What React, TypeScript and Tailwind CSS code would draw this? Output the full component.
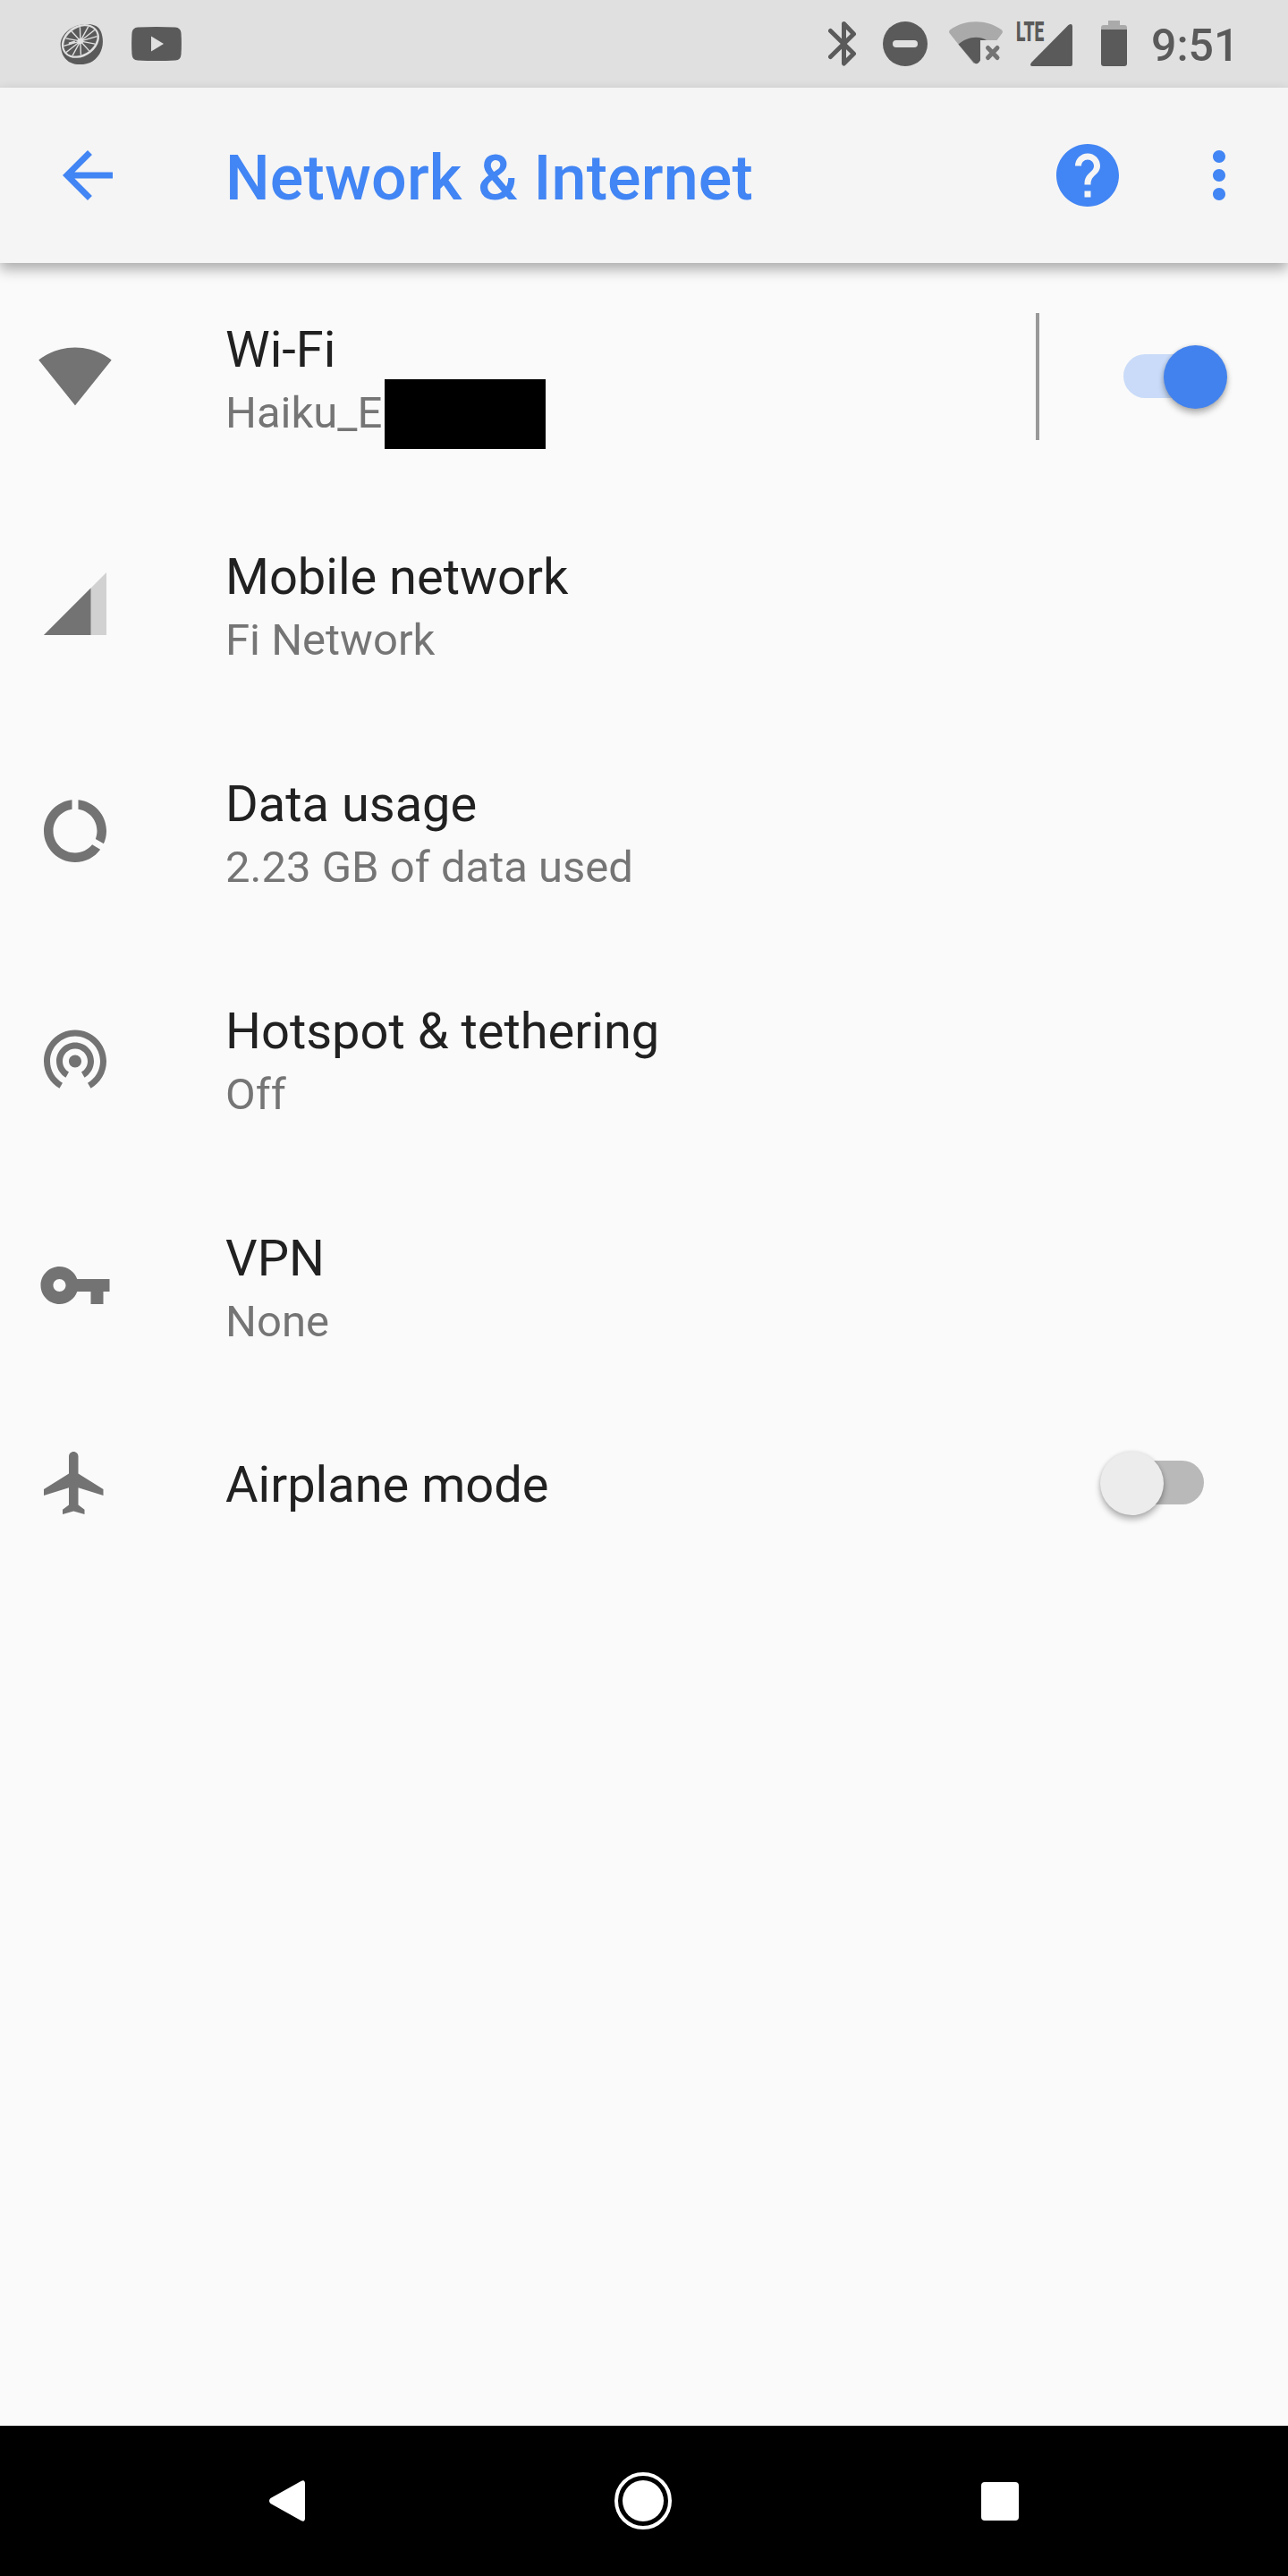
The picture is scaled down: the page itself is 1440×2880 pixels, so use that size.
import React from 'react'
import clsx from 'clsx'

interface IconProps {
  className?: string
}

interface SettingItem {
  id: string
  title: string
  summary?: string
  icon: React.ReactNode
  redacted?: boolean
  divider?: boolean
  checked?: boolean
}

// 24dp icon box at 3.5x density
const Icon = ({ className, children }: IconProps & { children: React.ReactNode }) => (
  <svg viewBox="0 0 24 24" fill="currentColor" className={clsx('h-[84px] w-[84px] shrink-0', className)}>
    {children}
  </svg>
)

const settings: SettingItem[] = [
  {
    id: 'wifi',
    title: 'Wi-Fi',
    summary: 'Haiku_E',
    redacted: true,
    divider: true,
    checked: true,
    icon: <path d="M12.01 21.2L23.64 6.71c-.45-.34-4.93-4-11.64-4C5.28 2.71.81 6.37.36 6.71l11.63 14.49.01.01.01-.01z" />
  },
  {
    id: 'mobile',
    title: 'Mobile network',
    summary: 'Fi Network',
    icon: (
      <>
        <path fillOpacity=".3" d="M2 22h20V2z" />
        <path d="M17 7L2 22h15z" />
      </>
    )
  },
  {
    id: 'data',
    title: 'Data usage',
    summary: '2.23 GB of data used',
    icon: (
      <path d="M13 2.05v3.03c3.39.49 6 3.39 6 6.92 0 .9-.18 1.75-.48 2.54l2.6 1.53c.56-1.24.88-2.62.88-4.07 0-5.18-3.95-9.45-9-9.95zM12 19c-3.87 0-7-3.13-7-7 0-3.53 2.61-6.43 6-6.92V2.05c-5.06.5-9 4.76-9 9.95 0 5.52 4.47 10 9.99 10 3.31 0 6.24-1.61 8.06-4.09l-2.6-1.53C16.17 17.98 14.21 19 12 19z" />
    )
  },
  {
    id: 'hotspot',
    title: 'Hotspot & tethering',
    summary: 'Off',
    icon: (
      <path d="M12 11c-1.1 0-2 .9-2 2s.9 2 2 2 2-.9 2-2-.9-2-2-2zm6 2c0-3.31-2.69-6-6-6s-6 2.69-6 6c0 2.22 1.21 4.15 3 5.19l1-1.74c-1.19-.7-2-1.97-2-3.45 0-2.21 1.79-4 4-4s4 1.79 4 4c0 1.48-.81 2.75-2 3.45l1 1.74c1.79-1.04 3-2.97 3-5.19zM12 3C6.48 3 2 7.48 2 13c0 3.7 2.01 6.92 4.99 8.65l1-1.73C5.61 18.53 4 15.96 4 13c0-4.42 3.58-8 8-8s8 3.58 8 8c0 2.96-1.61 5.53-4 6.92l1 1.73c2.99-1.73 5-4.95 5-8.65 0-5.52-4.48-10-10-10z" />
    )
  },
  {
    id: 'vpn',
    title: 'VPN',
    summary: 'None',
    icon: (
      <path d="M12.65 10C11.83 7.67 9.61 6 7 6c-3.31 0-6 2.69-6 6s2.69 6 6 6c2.61 0 4.83-1.67 5.65-4H17v4h4v-4h2v-4H12.65zM7 14c-1.1 0-2-.9-2-2s.9-2 2-2 2 .9 2 2-.9 2-2 2z" />
    )
  },
  {
    id: 'airplane',
    title: 'Airplane mode',
    checked: false,
    icon: (
      <path d="M21 16v-2l-8-5V3.5c0-.83-.67-1.5-1.5-1.5S10 2.67 10 3.5V9l-8 5v2l8-2.5V19l-2 1.5V22l3.5-1 3.5 1v-1.5L13 19v-5.5l8 2.5z" />
    )
  }
]

const CitrusIcon = () => (
  <svg viewBox="3 1 44 45" preserveAspectRatio="none" className="h-[46px] w-12 shrink-0">
    <path
      d="M4 28C1 14 16 1 32 2c7 .5 11 3 13 8 5 14 0 28-11 34-8 3.500-16 2.500-22-1C7 39 5 35 4 28z"
      fill="#5a5a5a"
    />
    <g transform="translate(24 20.500) rotate(-40)">
      <ellipse rx="21" ry="16.500" fill="#e0e0e0" />
      <ellipse rx="19" ry="14" fill="#5a5a5a" />
      <g stroke="#e0e0e0" strokeWidth="1.300">
        <path d="M-19 0H19M-16.500 7L16.500-7M-9.500 12L9.500-12M0 14V-14M9.500 12L-9.500-12M16.500 7L-16.500-7" />
      </g>
      <circle r="3" fill="#e0e0e0" />
    </g>
    <path d="M12 22l6-2 1 2-7 3z" fill="#e0e0e0" />
  </svg>
)

const StatusBar = () => (
  <header className="flex h-[98px] items-center bg-[#e0e0e0] pl-[67px] text-[#5a5a5a]">
    <CitrusIcon />
    <svg viewBox="0 0 56 38" className="ml-8 h-[38px] w-14 shrink-0">
      <path
        d="M7 .5Q28-.5 49 .5 55 1 55.500 7q.8 12 0 24-.5 6-6.500 6.500-21 1-42 0Q1 37 .5 31-.3 19 .5 7 1 1 7 .5z"
        fill="#5a5a5a"
      />
      <path d="M22 10.500v17L36 19z" fill="#e0e0e0" />
    </svg>

    <svg viewBox="0 0 32 50" fill="none" stroke="currentColor" strokeWidth="5" strokeLinecap="round" strokeLinejoin="round" className="ml-[723px] h-[50px] w-8 shrink-0">
      <path d="M2.500 10.500L28.500 36 17.500 47V2.500L28.500 14 2.500 39.500" />
    </svg>
    <svg viewBox="0 0 50 50" className="ml-[29px] h-[50px] w-[50px] shrink-0">
      <circle cx="25" cy="25" r="25" fill="currentColor" />
      <rect x="11" y="21" width="28" height="8" rx="4" fill="#e0e0e0" />
    </svg>
    <svg viewBox="0 0 60 50" className="ml-6 h-[50px] w-[60px] shrink-0">
      <path
        d="M1 9.500C18-2.700 42-2.700 59 9.500q1.500 1.500.5 3.500l-6 8H35v22L27.500 47 .5 13q-1-2 .5-3.500z"
        fill="#aaaaaa"
      />
      <path d="M10.500 25.500C18 18.500 32 14.500 42 21h-7v22.500c-2 4-5 5-7.500 2z" fill="#5a5a5a" />
      <path d="M43.500 29.500l10.500 11M54 29.500l-10.500 11" stroke="#737373" strokeWidth="5" strokeLinecap="round" />
    </svg>
    <div className="relative ml-4 h-[50px] w-[62px] shrink-0">
      <span className="absolute -top-[5px] -left-px origin-left scale-x-[0.62] font-black text-[31px] leading-[34px]">LTE</span>
      <svg viewBox="0 0 47 47" fill="currentColor" className="absolute right-0 bottom-0 h-[47px] w-[47px]">
        <path d="M42.500 1Q47-1.500 47 3v42q0 2-2 2H2.500Q-1.500 47 1 43z" />
      </svg>
    </div>
    <svg viewBox="0 0 29 51" className="ml-8 h-[51px] w-[29px] shrink-0 -translate-y-px">
      <path d="M8 0h13v5h5q3 0 3 3v3H0V8q0-3 3-3h5z" fill="#aaaaaa" />
      <path d="M0 10h29v38q0 3-3 3H3q-3 0-3-3z" fill="#5a5a5a" />
    </svg>
    <span className="ml-[27px] pt-[3px] text-[50px] leading-none font-medium">9:51</span>
  </header>
)

const AppBar = () => (
  <div className="relative z-10 flex h-[196px] items-center bg-[#f5f5f5] pl-14 text-[#4285f4] shadow-[0_7px_14px_rgba(0,0,0,0.32)]">
    <Icon>
      <path d="M20 11H7.830l5.590-5.590L12 4l-8 8 8 8 1.410-1.410L7.830 13H20v-2z" />
    </Icon>
    <h1 className="ml-28 w-[922px] pt-[6px] text-[70px] leading-[82px] font-medium tracking-[0.15px]">Network &amp; Internet</h1>
    <Icon>
      <path d="M12 2C6.480 2 2 6.480 2 12s4.480 10 10 10 10-4.480 10-10S17.520 2 12 2zm1 17h-2v-2h2v2zm2.070-7.750l-.9.920C13.450 12.900 13 13.500 13 15h-2v-.5c0-1.100.45-2.100 1.170-2.830l1.240-1.260c.37-.36.59-.86.59-1.410 0-1.100-.9-2-2-2s-2 .9-2 2H8c0-2.210 1.790-4 4-4s4 1.790 4 4c0 .88-.36 1.680-.93 2.250z" />
    </Icon>
    <Icon className="ml-[63px]">
      <path d="M12 8c1.100 0 2-.9 2-2s-.9-2-2-2-2 .9-2 2 .9 2 2 2zm0 2c-1.100 0-2 .9-2 2s.9 2 2 2 2-.9 2-2-.9-2-2-2zm0 6c-1.100 0-2 .9-2 2s.9 2 2 2 2-.9 2-2-.9-2-2-2z" />
    </Icon>
  </div>
)

const Toggle = ({ checked }: { checked: boolean }) => (
  <div
    role="switch"
    aria-checked={checked}
    className={clsx('flex h-[71px] w-[116px] items-center', checked ? 'mr-[68px]' : 'mr-[94px] flex-row-reverse')}
  >
    <div className={clsx('h-[49px] w-[90px] shrink-0 -translate-y-px rounded-full', checked ? 'bg-[#c9dbf8]' : 'bg-[#b9b9b9]')} />
    <div
      className={clsx(
        'relative h-[71px] w-[71px] shrink-0 rounded-full shadow-[0_5px_7px_rgba(0,0,0,0.28),0_0_4px_rgba(0,0,0,0.12)]',
        checked ? '-ml-[45px] bg-[#4282ee]' : '-mr-[45px] bg-[#ececec]'
      )}
    />
  </div>
)

const SettingRow = ({ item }: { item: SettingItem }) => (
  <li className={clsx('flex items-center pl-[42px]', item.summary ? 'h-[254px]' : 'h-[188px]')}>
    <Icon className="text-[#737373]">{item.icon}</Icon>
    <div className="ml-[126px] flex-1 pt-[5px]">
      <p className="text-[56px] leading-[75px] text-[#212121]">{item.title}</p>
      {item.summary && (
        <p className="relative text-[49px] leading-[65px] text-[#757575]">
          {item.summary}
          {item.redacted && <span className="absolute -top-[5px] left-[178px] h-[78px] w-[180px] bg-black" />}
        </p>
      )}
    </div>
    {item.divider && <div className="mr-[94px] h-[142px] w-1 bg-[#999999]" />}
    {item.checked !== undefined && <Toggle checked={item.checked} />}
  </li>
)

const NavigationBar = () => (
  <nav className="flex h-[168px] items-center bg-black pl-[301px] text-white">
    <svg viewBox="0 0 40 46" fill="currentColor" className="h-[46px] w-10">
      <path d="M35.500 1Q40-1.500 40 4v38q0 5.500-4.500 3L1.500 26q-3-3 0-6z" />
    </svg>
    <svg viewBox="0 0 64 64" className="ml-[346px] h-16 w-16">
      <circle cx="32" cy="32" r="30" fill="none" stroke="currentColor" strokeWidth="4" />
      <circle cx="32" cy="32" r="23" fill="currentColor" />
    </svg>
    <div className="ml-[346px] h-[43px] w-[42px] rounded-[4px] bg-white" />
  </nav>
)

const App = () => {
  return (
    <div className="flex h-[2880px] w-[1440px] flex-col overflow-hidden bg-[#fafafa] font-['Roboto',sans-serif]">
      <StatusBar />
      <AppBar />
      <ul className="flex-1">
        {settings.map((item) => (
          <SettingRow key={item.id} item={item} />
        ))}
      </ul>
      <NavigationBar />
    </div>
  )
}

export default App
